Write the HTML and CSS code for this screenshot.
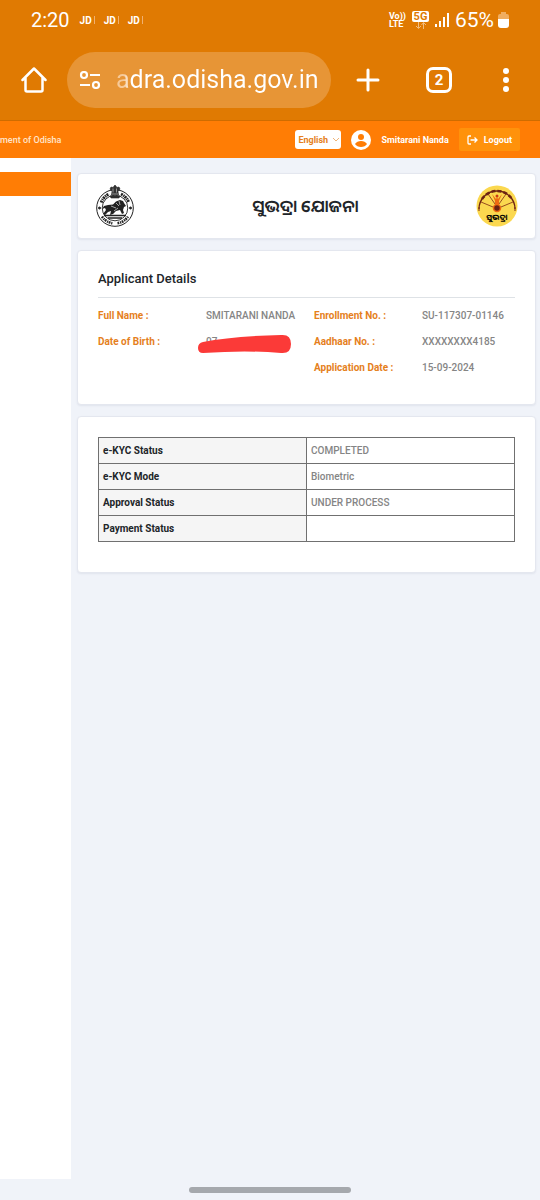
FILE: index.html
```
<!DOCTYPE html>
<html lang="en">
<head>
    <meta charset="UTF-8">
    <meta name="viewport" content="width=device-width, initial-scale=1.0">
    <title>Subhadra Yojana</title>
    <link rel="stylesheet" href="styles.css">
</head>
<body>
    <!-- Phone status bar and browser toolbar -->
    <div class="browser">
        <div class="status-bar">
            <span class="clock">2:20</span>
            <span class="notice">JD<i></i></span>
            <span class="notice">JD<i></i></span>
            <span class="notice">JD<i></i></span>
            <div class="status-right">
                <span class="volte"><span>Vo))</span><span>LTE</span></span>
                <span class="network">
                    <b>5G</b>
                    <svg width="12" height="8" viewBox="0 0 12 8" fill="none" stroke="#f2bd80"><path d="M3.500 0v6M1 4l2.500 2.500L6 4M8.500 7V1M6.500 3l2-2.500 2.500 2.500"/></svg>
                </span>
                <svg width="14" height="16" viewBox="0 0 14 16" fill="#fff"><path d="M0 12h2v3H0zM4 9h2v6H4zM8 5h2v10H8zM12 1h2v14h-2z"/></svg>
                <span class="percent">65%</span>
                <svg width="11" height="16" viewBox="0 0 11 16"><path d="M3 0h5v2h1q2 0 2 2v3H0V4q0-2 2-2h1z" fill="#f0ad60"/><path d="M0 7h11v6q0 3-3 3H3q-3 0-3-3z" fill="#fff"/></svg>
            </div>
        </div>
        <div class="toolbar">
            <button class="icon-btn home" aria-label="Home">
                <svg width="26" height="26" viewBox="0 0 26 26" fill="none" stroke="#fff" stroke-width="2.500" stroke-linejoin="round" stroke-linecap="round"><path d="M1.500 13L13 1.500 24.500 13M4.500 11v12q0 1.500 1.500 1.500h14q1.500 0 1.500-1.500V11"/></svg>
            </button>
            <div class="address">
                <svg width="22" height="18" viewBox="0 0 22 18" fill="none" stroke="#fff" stroke-width="2.200"><circle cx="5" cy="4" r="3"/><path d="M11 4h10M1 14h10"/><circle cx="17" cy="14" r="3"/></svg>
                <input type="text" class="url" value="adra.odisha.gov.in" aria-label="Address">
            </div>
            <button class="icon-btn plus" aria-label="New tab">
                <svg width="24" height="24" viewBox="0 0 24 24" stroke="#fff" stroke-width="3" stroke-linecap="round"><path d="M12 2v20M2 12h20"/></svg>
            </button>
            <button class="icon-btn tabs" aria-label="Open tabs">2</button>
            <button class="icon-btn more" aria-label="Menu">
                <svg width="8" height="24" viewBox="0 0 8 24" fill="#fff"><circle cx="4" cy="3" r="3"/><circle cx="4" cy="12" r="3"/><circle cx="4" cy="21" r="3"/></svg>
            </button>
        </div>
    </div>

    <header class="header">
        <span class="dept">ment of Odisha</span>
        <select class="language" aria-label="Language">
            <option>English</option>
        </select>
        <svg class="avatar" width="20" height="20" viewBox="0 0 20 20"><circle cx="10" cy="10" r="10" fill="#fff"/><circle cx="10" cy="7" r="3" fill="#ff7d05"/><path d="M4 14q2-3 6-3t6 3q-2 3-6 3t-6-3z" fill="#ff7d05"/></svg>
        <span class="user">Smitarani Nanda</span>
        <button class="logout">
            <svg width="11" height="10" viewBox="0 0 11 10" fill="none" stroke="#fff" stroke-width="1.300"><path d="M4 1H2q-1 0-1 1v6q0 1 1 1h2M3.500 5H10M7.500 2.500L10 5 7.500 7.500"/></svg>
            Logout
        </button>
    </header>

    <div class="layout">
        <aside class="sidebar">
            <div class="menu-active"></div>
        </aside>
        <main class="content">
            <section class="card banner">
                <!-- Odisha emblem -->
                <svg width="40" height="42" viewBox="0 0 40 42" fill="none" stroke="#222">
                    <circle cx="20" cy="23" r="18.300" stroke-width="1"/>
                    <circle cx="20" cy="23" r="12.800" stroke-width=".9"/>
                    <path d="M6.200 17.500A15.300 15.300 0 0 1 14 9M26 9a15.300 15.300 0 0 1 7.800 8.500" stroke-width="3" stroke-dasharray="2 .7 1.200 .6"/>
                    <path d="M7 31.500a15.300 15.300 0 0 0 10.500 6.700M22.500 38.200A15.300 15.300 0 0 0 33 31.500" stroke-width="2.600" stroke-dasharray="1.800 .8 1.200 .6"/>
                    <circle cx="4.500" cy="23" r="1" fill="#222"/><circle cx="35.500" cy="23" r="1" fill="#222"/>
                    <path d="M16 2l2 .5L20 0l2 2.500 2-.5 1 2-2 2.500.5 3.500h-7L17 6.500 15 4zM15 11h10l-1 2h-8z" fill="#333" stroke="#222" stroke-width=".6"/>
                    <path d="M18 3.500v4M21.500 3.500v4M17 9h6" stroke="#fff" stroke-width=".5"/>
                    <path d="M9 21l4-1 5-.5 3-3 4-1.500 3 1 1 2 2 3-2 1-1 3 1 3-2 1-2-4-4 1-3 3-3 1 1-4-3 1-3 3-2-1 3-4-1-2-3 1z" fill="#222" stroke="none"/>
                    <path d="M16 21l5 2M21 18l3 3M24 16l1 4M19 26l4-3" stroke="#fff" stroke-width=".6"/>
                    <path d="M9 30.500h22M13 33h14" stroke-width="1.300"/>
                </svg>
                <h1 lang="or">ସୁଭଦ୍ରା ଯୋଜନା</h1>
                <!-- Subhadra logo -->
                <svg width="42" height="42" viewBox="0 0 42 42">
                    <circle cx="21" cy="21" r="20.500" fill="#fbd84f"/>
                    <path d="M3 24a18 18 0 0 1 36 0" fill="none" stroke="#6b2213" stroke-width="1.300"/>
                    <path d="M6 14A18 18 0 0 1 36 14" fill="none" stroke="#6b2213" stroke-width="2.500" stroke-dasharray="4 2"/>
                    <path d="M17 22L5 17M25 22l12-5M19 19L12 9M23 19l7-10" stroke="#7d2813" stroke-width=".8" fill="none"/>
                    <path d="M3 22v4M39 22v4" stroke="#7d2813"/>
                    <path d="M16 9l4 5 1-2 1 2 4-5-3 7v4h-4v-4z" fill="#ee6b13"/>
                    <circle cx="21" cy="11" r="1.500" fill="#c93c16"/>
                    <circle cx="21" cy="23" r="3.500" fill="#6b2213" stroke="#ef6a10" stroke-width="1.500"/>
                    <text lang="or" x="21" y="35" class="logo-text">ସୁଭଦ୍ରା</text>
                </svg>
            </section>

            <section class="card applicant">
                <h2>Applicant Details</h2>
                <dl class="details">
                    <dt>Full Name :</dt>
                    <dd>SMITARANI NANDA</dd>
                    <dt>Enrollment No. :</dt>
                    <dd>SU-117307-01146</dd>
                    <dt>Date of Birth :</dt>
                    <dd class="hidden-value">07
                        <svg class="scribble" width="96" height="20" viewBox="0 0 96 20"><path d="M6 8Q35 2 84 1q10-1 10 9 0 10-10 9Q50 16 6 19 1 19 1 14t5-6z" fill="#fb3a38"/></svg>
                    </dd>
                    <dt>Aadhaar No. :</dt>
                    <dd>XXXXXXXX4185</dd>
                    <dt class="third">Application Date :</dt>
                    <dd>15-09-2024</dd>
                </dl>
            </section>

            <section class="card status">
                <table>
                    <tr><th scope="row">e-KYC Status</th><td>COMPLETED</td></tr>
                    <tr><th scope="row">e-KYC Mode</th><td>Biometric</td></tr>
                    <tr><th scope="row">Approval Status</th><td>UNDER PROCESS</td></tr>
                    <tr><th scope="row">Payment Status</th><td></td></tr>
                </table>
            </section>
        </main>
    </div>

    <div class="gesture-bar"><span></span></div>
</body>
</html>
```
FILE: styles.css
```
:root {
    --chrome: #e07a02;
    --primary: #ff7d05;
    --label: #e5801c;
    --page: #f0f3f9;
    --muted: #858585;
    --dark: #212529;
}

* {
    margin: 0;
    padding: 0;
    box-sizing: border-box;
}

body {
    min-height: 100vh;
    display: flex;
    flex-direction: column;
    background: var(--page);
    font-family: Roboto, "Liberation Sans", sans-serif;
    font-size: 10px;
    color: var(--dark);
    overflow-x: hidden;
}

button {
    border: none;
    background: none;
    color: white;
    font-family: inherit;
    cursor: pointer;
}

svg {
    flex-shrink: 0;
}

/* Browser */
.browser {
    background: var(--chrome);
    border-bottom: 1px solid #cf6c00;
    color: white;
}

.status-bar {
    display: flex;
    align-items: center;
    height: 40px;
    padding: 0 31px;
}

.clock {
    font-size: 20px;
    margin-right: 10px;
}

.notice {
    display: flex;
    align-items: center;
    gap: 2px;
    margin-right: 9px;
    font-size: 10px;
    font-weight: 700;
}

.notice i {
    width: 1px;
    height: 8px;
    background: #f0b070;
}

.status-right {
    display: flex;
    align-items: center;
    gap: 6px;
    margin-left: auto;
}

.volte {
    display: flex;
    flex-direction: column;
    font-size: 9px;
    line-height: 8px;
    font-weight: 700;
}

.network {
    display: flex;
    flex-direction: column;
    align-items: center;
}

.network b {
    width: 17px;
    border-radius: 2px;
    background: white;
    color: var(--chrome);
    font-size: 11px;
    line-height: 11px;
    text-align: center;
}

.percent {
    font-size: 21px;
    margin-right: -2px;
}

.toolbar {
    display: flex;
    align-items: center;
    height: 80px;
    padding: 0 30px 0 21px;
}

.icon-btn {
    display: flex;
    align-items: center;
    justify-content: center;
    flex-shrink: 0;
}

.address {
    display: flex;
    align-items: center;
    flex: 1;
    min-width: 0;
    gap: 15px;
    height: 56px;
    margin: 0 25px 0 20px;
    padding: 0 8px 0 12px;
    border-radius: 28px;
    background: #e79536;
}

.url {
    flex: 1;
    width: 100%;
    min-width: 0;
    border: none;
    outline: none;
    background: linear-gradient(to right, #f6c998 8px, white 14px);
    background-clip: text;
    -webkit-background-clip: text;
    color: transparent;
    font-family: inherit;
    font-size: 25px;
    line-height: 36px;
}

.tabs {
    width: 26px;
    height: 26px;
    margin: 0 50px 0 46px;
    border: 3px solid white;
    border-radius: 7px;
    font-size: 15px;
    font-weight: 700;
}

/* Site header */
.header {
    display: flex;
    align-items: center;
    height: 37px;
    padding-right: 20px;
    background: var(--primary);
    color: white;
}

.dept {
    color: #ffe5cc;
    font-size: 9px;
    font-weight: 500;
    margin-right: auto;
}

.language {
    width: 46px;
    height: 19px;
    padding: 0 3px;
    border: none;
    border-radius: 3px;
    appearance: none;
    background: white url("data:image/svg+xml,%3Csvg xmlns='http://www.w3.org/2000/svg' width='6' height='4' fill='none' stroke='%23efb478'%3E%3Cpath d='M0 0l3 3 3-3'/%3E%3C/svg%3E") no-repeat right 2px center;
    color: var(--label);
    font-family: inherit;
    font-size: 9px;
    font-weight: 700;
}

.avatar {
    margin: 0 10px;
}

.user {
    font-size: 9px;
    font-weight: 700;
}

.logout {
    display: flex;
    align-items: center;
    gap: 6px;
    height: 23px;
    margin-left: 10px;
    padding: 0 8px;
    border-radius: 2px;
    background: #ff920b;
    font-size: 9px;
    font-weight: 700;
}

/* Page */
.layout {
    display: flex;
    flex: 1;
}

.sidebar {
    width: 71px;
    flex-shrink: 0;
    padding-top: 14px;
    background: white;
}

.menu-active {
    height: 24px;
    background: var(--primary);
}

.content {
    flex: 1;
    min-width: 0;
    display: flex;
    flex-direction: column;
    gap: 11px;
    padding: 15px 4px 20px 6px;
}

.card {
    padding: 20px;
    border: 1px solid #e4e7ef;
    border-radius: 4px;
    background: white;
    box-shadow: 0 1px 2px rgba(50, 60, 100, 0.08);
}

.banner {
    display: flex;
    align-items: center;
    justify-content: space-between;
    padding: 11px 17px;
}

.banner h1 {
    font-family: "Noto Sans Oriya", "Noto Sans", sans-serif;
    font-size: 17px;
    line-height: 24px;
    font-weight: 600;
}

.logo-text {
    font-family: "Noto Sans Oriya", "Noto Sans", sans-serif;
    font-size: 8px;
    font-weight: 700;
    text-anchor: middle;
}

.applicant {
    min-height: 155px;
}

.applicant h2 {
    padding-bottom: 10px;
    border-bottom: 1px solid #dee2e6;
    font-size: 13px;
    line-height: 16px;
    font-weight: 500;
}

.details {
    display: grid;
    grid-template-columns: repeat(4, minmax(0, 1fr));
    column-gap: 15px;
    row-gap: 10px;
    padding-top: 10px;
    font-size: 10px;
    line-height: 16px;
    white-space: nowrap;
}

.details dt {
    color: var(--label);
    font-weight: 700;
}

.details dd {
    color: var(--muted);
    font-weight: 500;
}

.details .third {
    grid-column: 3;
}

.hidden-value {
    position: relative;
}

.scribble {
    position: absolute;
    top: 0;
    left: -9px;
}

.status {
    min-height: 157px;
}

.status table {
    width: 100%;
    table-layout: fixed;
    border-collapse: collapse;
    font-size: 10px;
    line-height: 16px;
}

.status th,
.status td {
    height: 26px;
    padding: 0 4px;
    border: 1px solid #707070;
    text-align: left;
}

.status th {
    background: #f5f5f5;
    font-weight: 700;
}

.status td {
    color: var(--muted);
    font-weight: 500;
}

/* Gesture bar */
.gesture-bar {
    display: flex;
    justify-content: center;
    height: 21px;
    padding-top: 8px;
}

.gesture-bar span {
    width: 30%;
    height: 6px;
    border-radius: 3px;
    background: #a5a8ad;
}
```
